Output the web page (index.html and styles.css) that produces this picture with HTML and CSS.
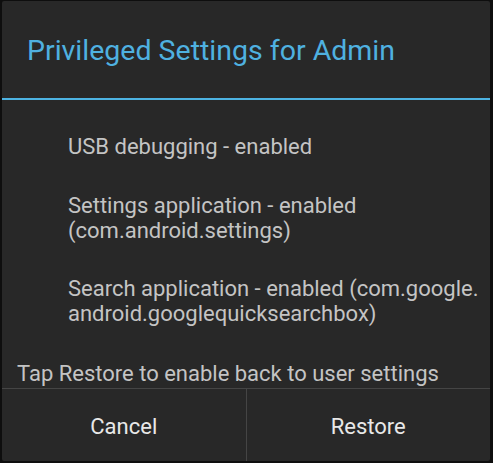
FILE: index.html
```html
<!DOCTYPE html>
<html>
<head>
<meta charset="utf-8">
<link rel="stylesheet" href="styles.css">
</head>
<body>
<div class="dialog">
  <div class="header">
    <h1 class="title">Privileged Settings for Admin</h1>
  </div>
  <ul class="items">
    <li class="item">USB debugging - enabled</li>
    <li class="item">Settings application - enabled (com.android.settings)</li>
    <li class="item">Search application - enabled (com.google.<br>android.googlequicksearchbox)</li>
  </ul>
  <p class="message">Tap Restore to enable back to user settings</p>
  <div class="buttons">
    <button class="btn">Cancel</button>
    <button class="btn">Restore</button>
  </div>
</div>
</body>
</html>
```
FILE: styles.css
```css
html, body {
  margin: 0;
  padding: 0;
  background: #0e0e0e;
  width: 493px;
  height: 463px;
  overflow: hidden;
}
body {
  font-family: Roboto, "Noto Sans", sans-serif;
  padding: 1px 3px 2px 2px;
  box-sizing: border-box;
}
.dialog {
  background: #282828;
  height: 460px;
  display: flex;
  flex-direction: column;
  border-radius: 2px;
}
.header {
  padding: 33px 0 30px 25px;
  border-bottom: 2px solid #4db3e2;
}
.title {
  margin: 0;
  font-size: 28.5px;
  line-height: 34px;
  font-weight: 400;
  color: #4fb1e0;
}
.items {
  list-style: none;
  margin: 0;
  padding: 34px 4px 0 66px;
  display: flex;
  flex-direction: column;
  gap: 33.5px;
}
.item {
  font-size: 22px;
  line-height: 25px;
  color: #c4c4c4;
}
.message {
  margin: 34.5px 0 0 0;
  padding-left: 15px;
  font-size: 22px;
  line-height: 25px;
  color: #c4c4c4;
}
.buttons {
  margin-top: auto;
  display: flex;
  border-top: 1px solid #454545;
  height: 72px;
}
.btn {
  flex: 1;
  background: transparent;
  border: none;
  font-family: Roboto, "Noto Sans", sans-serif;
  font-size: 22px;
  color: #e8e8e8;
  padding: 2px 0 0 0;
}
.btn + .btn {
  border-left: 1px solid #454545;
}
```
